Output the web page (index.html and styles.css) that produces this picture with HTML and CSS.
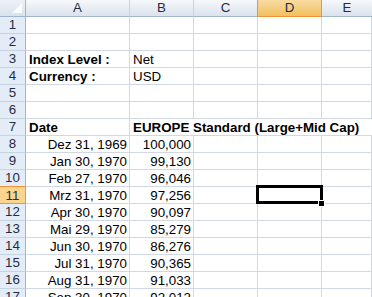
FILE: index.html
```html
<!DOCTYPE html>
<html>
<head>
<meta charset="utf-8">
<link rel="stylesheet" href="styles.css">
</head>
<body>
<div class="sheet">
  <div class="corner"><span class="tri"></span></div>
  <div class="ch">A</div>
  <div class="ch">B</div>
  <div class="ch">C</div>
  <div class="ch sel">D</div>
  <div class="ch last">E</div>

  <div class="rh">1</div><div class="c"></div><div class="c"></div><div class="c"></div><div class="c"></div><div class="c"></div>
  <div class="rh">2</div><div class="c"></div><div class="c"></div><div class="c"></div><div class="c"></div><div class="c"></div>
  <div class="rh">3</div><div class="c b">Index Level :</div><div class="c">Net</div><div class="c"></div><div class="c"></div><div class="c"></div>
  <div class="rh">4</div><div class="c b">Currency :</div><div class="c">USD</div><div class="c"></div><div class="c"></div><div class="c"></div>
  <div class="rh">5</div><div class="c"></div><div class="c"></div><div class="c"></div><div class="c"></div><div class="c"></div>
  <div class="rh">6</div><div class="c"></div><div class="c"></div><div class="c"></div><div class="c"></div><div class="c"></div>
  <div class="rh">7</div><div class="c b">Date</div><div class="c b span4">EUROPE Standard (Large+Mid Cap)</div>
  <div class="rh">8</div><div class="c r">Dez 31, 1969</div><div class="c r">100,000</div><div class="c"></div><div class="c"></div><div class="c"></div>
  <div class="rh">9</div><div class="c r">Jan 30, 1970</div><div class="c r">99,130</div><div class="c"></div><div class="c"></div><div class="c"></div>
  <div class="rh">10</div><div class="c r">Feb 27, 1970</div><div class="c r">96,046</div><div class="c"></div><div class="c"></div><div class="c"></div>
  <div class="rh sel">11</div><div class="c r">Mrz 31, 1970</div><div class="c r">97,256</div><div class="c"></div><div class="c active"><span class="box"></span><span class="handle"></span></div><div class="c"></div>
  <div class="rh">12</div><div class="c r">Apr 30, 1970</div><div class="c r">90,097</div><div class="c"></div><div class="c"></div><div class="c"></div>
  <div class="rh">13</div><div class="c r">Mai 29, 1970</div><div class="c r">85,279</div><div class="c"></div><div class="c"></div><div class="c"></div>
  <div class="rh">14</div><div class="c r">Jun 30, 1970</div><div class="c r">86,276</div><div class="c"></div><div class="c"></div><div class="c"></div>
  <div class="rh">15</div><div class="c r">Jul 31, 1970</div><div class="c r">90,365</div><div class="c"></div><div class="c"></div><div class="c"></div>
  <div class="rh">16</div><div class="c r">Aug 31, 1970</div><div class="c r">91,033</div><div class="c"></div><div class="c"></div><div class="c"></div>
  <div class="rh">17</div><div class="c r">Sep 30, 1970</div><div class="c r">92,012</div><div class="c"></div><div class="c"></div><div class="c"></div>
</div>
</body>
</html>
```
FILE: styles.css
```css
html, body {
  margin: 0;
  padding: 0;
  background: #fff;
  overflow: hidden;
}
.sheet {
  display: grid;
  grid-template-columns: 26px 104px 64px 64px 64px 1fr;
  grid-auto-rows: 17px;
  width: 372px;
  font-family: "Liberation Sans", Arial, sans-serif;
  font-size: 13.33px;
  color: #000;
}
.sheet > div {
  box-sizing: border-box;
  white-space: nowrap;
}
.corner {
  position: relative;
  background: linear-gradient(#eef2f8, #d9e1ec);
  border-right: 1px solid #9eb6ce;
  border-bottom: 1px solid #9eb6ce;
}
.tri {
  position: absolute;
  right: 3px;
  bottom: 3px;
  width: 0;
  height: 0;
  border-left: 10px solid transparent;
  border-bottom: 10px solid #fcfdfe;
}
.ch {
  background: linear-gradient(#f6f8fb, #dbe2ec);
  border-right: 1px solid #c7d3e2;
  border-bottom: 1px solid #9eb6ce;
  text-align: center;
  line-height: 16px;
  color: #1f2d42;
}
.ch.last { border-right: none; }
.ch.sel {
  background: linear-gradient(#f9dba3, #f1c15f);
  border: 1px solid #f29436;
  border-top: none;
  margin-left: -1px;
}
.rh {
  background: #e4ecf7;
  border-right: 1px solid #9eb6ce;
  border-bottom: 1px solid #c5d3e3;
  text-align: center;
  line-height: 16px;
  color: #1f2d42;
}
.rh.sel {
  background: #fbd58f;
  border: 1px solid #f29436;
  border-left: none;
  margin-top: -1px;
  height: 18px;
  line-height: 17px;
}
.c {
  border-right: 1px solid #d0d7e5;
  border-bottom: 1px solid #d0d7e5;
  line-height: 15px;
  padding: 1px 3px 0 3px;
}
.b { font-weight: bold; }
.r { text-align: right; padding-right: 2px; }
.span4 { grid-column: span 4; border-right: none; }
.active { position: relative; }
.box {
  position: absolute;
  left: -2px;
  top: -2px;
  width: 67px;
  height: 19px;
  box-sizing: border-box;
  border: 3px solid #000;
}
.handle {
  position: absolute;
  right: -3px;
  bottom: -3px;
  width: 5px;
  height: 5px;
  background: #000;
  outline: 1px solid #fff;
}
```
